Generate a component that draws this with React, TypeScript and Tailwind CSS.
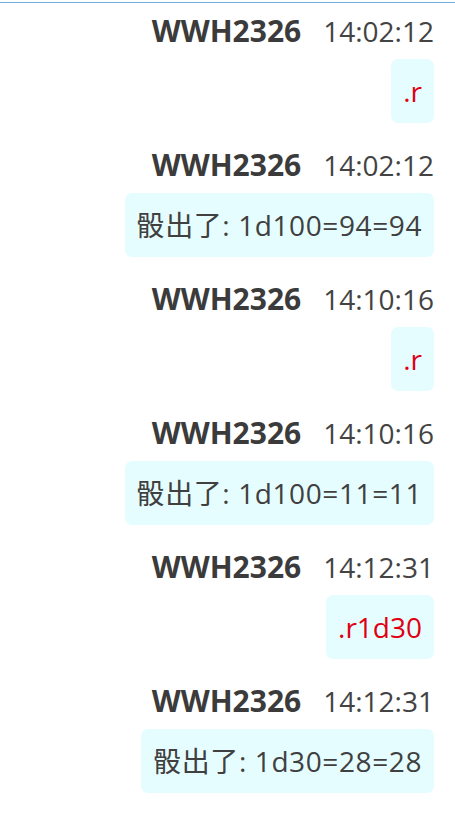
import React from 'react';

type Msg = { name: string; time: string; text: string; command?: boolean };

const messages: Msg[] = [
  { name: 'WWH2326', time: '14:02:12', text: '.r', command: true },
  { name: 'WWH2326', time: '14:02:12', text: '骰出了: 1d100=94=94' },
  { name: 'WWH2326', time: '14:10:16', text: '.r', command: true },
  { name: 'WWH2326', time: '14:10:16', text: '骰出了: 1d100=11=11' },
  { name: 'WWH2326', time: '14:12:31', text: '.r1d30', command: true },
  { name: 'WWH2326', time: '14:12:31', text: '骰出了: 1d30=28=28' },
];

function MessageItem({ msg }: { msg: Msg }) {
  return (
    <div className="flex flex-col items-end mb-[23px]">
      {/* header: name + time */}
      <div className="flex items-baseline h-[38px] leading-[38px] text-[#434343]">
        <span className="font-bold text-[30px] text-[#3b3b3b]">{msg.name}</span>
        <span className="ml-[22px] text-[28px]">{msg.time}</span>
      </div>
      {/* bubble */}
      <div
        className={`mt-[9px] h-[64px] flex items-center px-[12px] rounded-[7px] bg-[#e6fdff] text-[28px] whitespace-nowrap ${
          msg.command ? 'text-[#e00012]' : 'text-[#404040] tracking-[0.6px]'
        }`}
      >
        {msg.text}
      </div>
    </div>
  );
}

export default function App() {
  return (
    <div
      className="w-[455px] h-[815px] overflow-hidden bg-white"
      style={{ fontFamily: '"Open Sans", "Noto Sans CJK SC", sans-serif' }}
    >
      <div className="pt-[2px]">
        <div className="h-px bg-[#72aee6]" />
      </div>
      <div className="pt-[9px] pr-[21px]">
        {messages.map((m, i) => (
          <MessageItem key={i} msg={m} />
        ))}
      </div>
    </div>
  );
}
